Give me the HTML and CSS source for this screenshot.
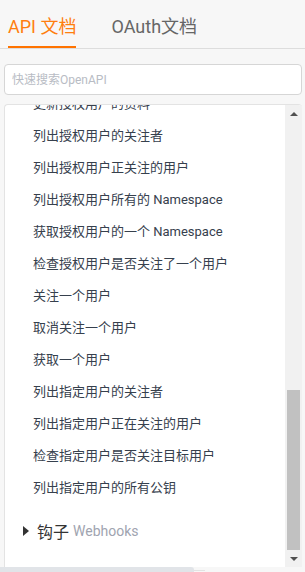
FILE: index.html
```html
<!DOCTYPE html>
<html lang="zh-CN">
<head>
  <meta charset="UTF-8">
  <meta name="viewport" content="width=device-width, initial-scale=1.0">
  <title>API 文档</title>
  <link rel="stylesheet" href="styles.css">
</head>
<body>
  <div class="tabs">
    <div class="tab active">API 文档</div>
    <div class="tab">OAuth文档</div>
  </div>

  <div class="search">
    <input type="text" placeholder="快速搜索OpenAPI">
  </div>

  <div class="panel">
    <div class="list">
      <div class="item">更新授权用户的资料</div>
      <div class="item">列出授权用户的关注者</div>
      <div class="item">列出授权用户正关注的用户</div>
      <div class="item">列出授权用户所有的 Namespace</div>
      <div class="item">获取授权用户的一个 Namespace</div>
      <div class="item">检查授权用户是否关注了一个用户</div>
      <div class="item">关注一个用户</div>
      <div class="item">取消关注一个用户</div>
      <div class="item">获取一个用户</div>
      <div class="item">列出指定用户的关注者</div>
      <div class="item">列出指定用户正在关注的用户</div>
      <div class="item">检查指定用户是否关注目标用户</div>
      <div class="item">列出指定用户的所有公钥</div>
      <div class="group">
        <span class="caret"></span>
        <span class="group-name">钩子</span>
        <span class="group-en">Webhooks</span>
      </div>
    </div>
    <!-- fake scrollbar -->
    <div class="scrollbar">
      <div class="arrow up"></div>
      <div class="track">
        <div class="thumb"></div>
      </div>
      <div class="arrow down"></div>
    </div>
  </div>

  <div class="bottom">
    <div class="hbar"></div>
    <div class="hline"></div>
  </div>
</body>
</html>
```

FILE: styles.css
```css
/* General */
body {
  margin: 0;
  background: #f7f7f7;
  font-family: Roboto, 'Noto Sans CJK SC', sans-serif;
  color: #333;
  height: 572px;
  overflow: hidden;
}

/* Tabs */
.tabs {
  display: flex;
  gap: 35px;
  padding: 0 8px;
  height: 48px;
  border-bottom: 1px solid #ddd;
}

.tab {
  font-size: 18px;
  color: #666;
  line-height: 20px;
  padding-top: 17px;
  box-sizing: border-box;
  height: 48px;
}

.tab.active {
  color: #ff7e0f;
  border-bottom: 2px solid #ff7300;
}

/* Search */
.search {
  padding: 15px 3px 0 4px;
}

.search input {
  width: 100%;
  height: 31px;
  box-sizing: border-box;
  border: 1px solid #d6d6d6;
  border-radius: 4px;
  padding: 0 7px;
  font-family: inherit;
  font-size: 12px;
  background: #fff;
  outline: none;
}

.search input::placeholder {
  color: #b8bcc4;
}

/* List panel */
.panel {
  display: flex;
  margin: 9px 3px 0 4px;
  height: 462px;
  background: #fff;
  border-left: 1px solid #e3e3e3;
  border-top: 1px solid #e3e3e3;
  border-radius: 4px 4px 0 0;
  overflow: hidden;
}

.list {
  flex: 1;
  margin-top: -17px;
}

.item {
  height: 32px;
  line-height: 32px;
  padding-left: 28px;
  font-size: 13px;
  color: #36404d;
  white-space: nowrap;
}

.group {
  display: flex;
  align-items: center;
  gap: 4px;
  height: 30px;
  margin-top: 12px;
  padding-left: 18px;
}

.caret {
  width: 0;
  height: 0;
  border-top: 5px solid transparent;
  border-bottom: 5px solid transparent;
  border-left: 6px solid #333;
  margin-right: 4px;
}

.group-name {
  font-size: 16px;
  color: #333;
}

.group-en {
  font-size: 14px;
  color: #a0a4b0;
}

/* Scrollbar */
.scrollbar {
  width: 17px;
  display: flex;
  flex-direction: column;
  background: #f1f1f1;
}

.arrow {
  height: 17px;
  display: flex;
  align-items: center;
  justify-content: center;
}

.arrow::after {
  content: '';
  border-left: 4px solid transparent;
  border-right: 4px solid transparent;
}

.arrow.up::after {
  border-bottom: 4px solid #505050;
}

.arrow.down::after {
  border-top: 4px solid #505050;
}

.track {
  flex: 1;
  display: flex;
  flex-direction: column;
  justify-content: flex-end;
  padding: 0 2px;
}

.thumb {
  height: 160px;
  background: #c1c1c1;
}

/* Outer horizontal bar */
.bottom {
  display: flex;
  align-items: flex-start;
}

.hbar {
  width: 194px;
  height: 6px;
  background: #e1e4e8;
  border-radius: 0 3px 0 0;
}

.hline {
  width: 11px;
  margin-top: 3px;
  border-top: 1px solid #e3e3e3;
}
```
